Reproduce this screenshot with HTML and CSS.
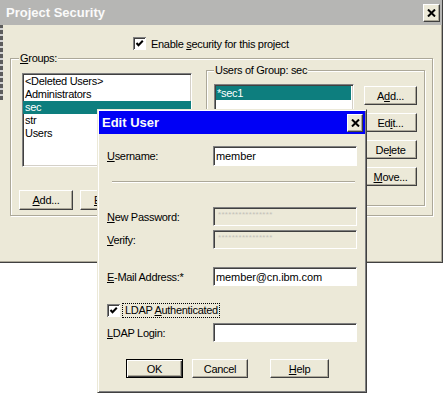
FILE: index.html
```html
<!DOCTYPE html>
<html>
<head>
<meta charset="utf-8">
<title>Project Security</title>
<link rel="stylesheet" href="styles.css">
</head>
<body>
<div class="window">
  <div class="titlebar inactive">
    <span class="title">Project Security</span>
    <span class="close"><svg width="9" height="8" viewBox="0 0 9 8"><path d="M1 0.5 L8 7.5 M8 0.5 L1 7.5" stroke="#000" stroke-width="2"/></svg></span>
  </div>
  <div class="wbody">
    <div class="enable">
      <span class="check"><svg width="13" height="13" viewBox="0 0 13 13"><rect x="0" y="0" width="13" height="13" fill="#808080"/><rect x="1" y="1" width="12" height="12" fill="#fff"/><rect x="1" y="1" width="11" height="11" fill="#404040"/><rect x="2" y="2" width="10" height="10" fill="#fff"/><rect x="1" y="12" width="12" height="1" fill="#fff"/><rect x="12" y="1" width="1" height="12" fill="#fff"/><polyline points="3.5,6 5.5,8.2 9.8,3.8" fill="none" stroke="#000" stroke-width="2"/></svg></span>
      <span>Enable <u>s</u>ecurity for this project</span>
    </div>
    <div class="group groups">
      <span class="legend"><u>G</u>roups:</span>
      <div class="group-row">
        <div class="leftcol">
          <ul class="listbox grouplist">
            <li>&lt;Deleted Users&gt;</li>
            <li>Administrators</li>
            <li class="sel">sec</li>
            <li>str</li>
            <li>Users</li>
          </ul>
          <div class="btnrow">
            <button class="btn w54"><u>A</u>dd...</button>
            <button class="btn w54"><u>E</u>dit...</button>
            <button class="btn w54">De<u>l</u>ete</button>
          </div>
        </div>
        <div class="group users">
          <span class="legend">Users of Group: sec</span>
          <div class="users-row">
            <ul class="listbox userlist">
              <li class="sel">*sec1</li>
            </ul>
            <div class="btncol">
              <button class="btn w53">A<u>d</u>d...</button>
              <button class="btn w53">Ed<u>i</u>t...</button>
              <button class="btn w53">De<u>l</u>ete</button>
              <button class="btn w53"><u>M</u>ove...</button>
            </div>
          </div>
        </div>
      </div>
    </div>
  </div>
</div>

<div class="dialog">
  <div class="titlebar active">
    <span class="title">Edit User</span>
    <span class="close dclose"><svg width="9" height="8" viewBox="0 0 9 8"><path d="M1 0.5 L8 7.5 M8 0.5 L1 7.5" stroke="#000" stroke-width="2"/></svg></span>
  </div>
  <div class="form">
    <div class="frow r-user">
      <span class="lbl"><u>U</u>sername:</span>
      <span class="field">member</span>
    </div>
    <div class="sep"></div>
    <div class="frow r-pw">
      <span class="lbl"><u>N</u>ew Password:</span>
      <span class="field disabled"><span class="stars">****************</span></span>
    </div>
    <div class="frow r-verify">
      <span class="lbl"><u>V</u>erify:</span>
      <span class="field disabled"><span class="stars">****************</span></span>
    </div>
    <div class="frow r-mail">
      <span class="lbl"><u>E</u>-Mail Address:*</span>
      <span class="field">member@cn.ibm.com</span>
    </div>
    <div class="cbrow">
      <span class="check"><svg width="13" height="13" viewBox="0 0 13 13"><rect x="0" y="0" width="13" height="13" fill="#808080"/><rect x="1" y="1" width="12" height="12" fill="#fff"/><rect x="1" y="1" width="11" height="11" fill="#404040"/><rect x="2" y="2" width="10" height="10" fill="#fff"/><rect x="1" y="12" width="12" height="1" fill="#fff"/><rect x="12" y="1" width="1" height="12" fill="#fff"/><polyline points="3.5,6 5.5,8.2 9.8,3.8" fill="none" stroke="#000" stroke-width="2"/></svg></span>
      <span class="focus">LDAP <u>A</u>uthenticated</span>
    </div>
    <div class="frow r-ldap">
      <span class="lbl"><u>L</u>DAP Login:</span>
      <span class="field"></span>
    </div>
    <div class="dbtns">
      <button class="btn default">OK</button>
      <button class="btn cancel">Cancel</button>
      <button class="btn help"><u>H</u>elp</button>
    </div>
  </div>
</div>
</body>
</html>
```

FILE: styles.css
```css
* { box-sizing: border-box; }
html, body { margin: 0; padding: 0; }
body {
  width: 443px;
  height: 395px;
  overflow: hidden;
  position: relative;
  background: #fff;
  font-family: "Liberation Sans", Arial, sans-serif;
  font-size: 11px;
  letter-spacing: -0.3px;
  color: #000;
}
u { text-decoration: underline; text-underline-offset: 1px; }
ul { list-style: none; margin: 0; }

.window {
  width: 443px;
  height: 263px;
  display: flex;
  flex-direction: column;
  background:
    repeating-linear-gradient(to bottom, #5c5c5c 0 4px, #d2d2d2 4px 6px) 0 0 / 3px 100px no-repeat,
    #ece9d8;
  border-right: 1px solid #404040;
  border-bottom: 1px solid #404040;
  box-shadow: inset -1px -1px #aca899;
}

.titlebar {
  display: flex;
  align-items: center;
  flex: none;
}
.titlebar.inactive {
  height: 25px;
  background: #b6b6b4;
  padding: 0 2px 0 6px;
}
.titlebar .title {
  font-weight: bold;
  font-size: 13px;
  letter-spacing: 0;
  color: #fafafa;
}
.close {
  margin-left: auto;
  width: 17px;
  height: 18px;
  display: flex;
  align-items: center;
  justify-content: center;
  background: #ece9d8;
  border: 1px solid;
  border-color: #fff #404040 #404040 #fff;
  box-shadow: inset -1px -1px #aca899;
}

.wbody {
  display: flex;
  flex-direction: column;
  padding-top: 12px;
}

.enable {
  display: flex;
  align-items: center;
  gap: 5px;
  height: 13px;
  padding-left: 133px;
}
.check { display: block; width: 13px; height: 13px; }
.check svg { display: block; }

.group {
  border: 1px solid #aca899;
  box-shadow: 1px 1px #fff, inset 1px 1px #fff;
  display: flex;
  flex-direction: column;
}
.groups {
  margin: 8px 0 0 10px;
  width: 423px;
  height: 158px;
}
.legend {
  display: block;
  width: max-content;
  line-height: 13px;
  margin: -7px 0 0 8px;
  padding: 0 1px;
  background: #ece9d8;
}
.group-row {
  display: flex;
  align-items: flex-start;
}
.leftcol {
  width: 173px;
  margin: 8px 0 0 8px;
  flex: none;
}
.listbox {
  background: #fff;
  border: 1px solid;
  border-color: #808080 #fff #fff #808080;
  box-shadow: inset 1px 1px #404040, inset -1px -1px #d4d0c8;
  padding: 1px 0;
  overflow: hidden;
}
.listbox li {
  height: 13px;
  line-height: 13px;
  padding-left: 2px;
  white-space: nowrap;
}
.listbox li.sel {
  background: #0d7e7e;
  color: #fff;
}
.grouplist {
  width: 170px;
  height: 94px;
  margin-left: 3px;
}
.btnrow {
  display: flex;
  gap: 7px;
  margin-top: 23px;
}

.btn {
  font: inherit;
  letter-spacing: inherit;
  color: #000;
  background: #ece9d8;
  border: 1px solid;
  border-color: #fff #404040 #404040 #fff;
  box-shadow: inset -1px -1px #aca899;
  padding: 0;
  height: 20px;
  flex: none;
}
.w54 { width: 54px; }
.w53 { width: 53px; height: 19px; }

.users {
  margin: 5px 0 0 14px;
  width: 219px;
  height: 136px;
}
.users .legend { margin-left: 7px; }
.users-row {
  display: flex;
  align-items: flex-start;
}
.userlist {
  width: 140px;
  height: 120px;
  margin: 7px 0 0 7px;
  padding: 1px 2px 0 1px;
}
.userlist li {
  height: 14px;
  line-height: 14px;
  padding-left: 1px;
}
.btncol {
  display: flex;
  flex-direction: column;
  gap: 8px;
  margin: 9px 0 0 10px;
}

/* dialog */
.dialog {
  position: absolute;
  left: 97px;
  top: 109px;
  width: 270px;
  height: 284px;
  background: #ece9d8;
  border: 1px solid;
  border-color: #ece9d8 #404040 #404040 #ece9d8;
  box-shadow: inset 1px 1px #fff, inset -1px -1px #808080;
  padding: 1px;
  display: flex;
  flex-direction: column;
}
.titlebar.active {
  height: 23px;
  background: #0000f6;
  padding: 0 2px 0 3px;
}
.dclose { width: 16px; height: 18px; }

.form {
  padding: 12px 8px 0 8px;
  display: flex;
  flex-direction: column;
}
.frow {
  display: flex;
  align-items: center;
  height: 19px;
}
.lbl { width: 106px; flex: none; }
.field {
  width: 144px;
  height: 100%;
  background: #fff;
  border: 1px solid;
  border-color: #808080 #fff #fff #808080;
  box-shadow: inset 1px 1px #404040;
  padding-left: 2px;
  display: flex;
  align-items: center;
  letter-spacing: -0.1px;
}
.field.disabled {
  background: #ece9d8;
  align-items: flex-start;
  padding: 3px 0 0 4px;
}
.stars {
  font-size: 8px;
  line-height: 8px;
  letter-spacing: 0.3px;
  color: #c4c2b8;
}
.r-user { height: 20px; }
.sep {
  margin: 15px 0 0 5px;
  width: 243px;
  height: 2px;
  border-top: 1px solid #aca899;
  border-bottom: 1px solid #fff;
}
.r-pw { margin-top: 24px; }
.r-verify { margin-top: 4px; }
.r-mail { margin-top: 18px; }
.cbrow {
  margin-top: 17px;
  height: 14px;
  display: flex;
  align-items: center;
  gap: 3px;
}
.focus {
  outline: 1px dotted #000;
  outline-offset: 0;
  padding: 0 1px 0 2px;
  line-height: 13px;
}
.r-ldap { margin-top: 6px; }
.dbtns {
  display: flex;
  margin-top: 17px;
  padding-left: 19px;
}
.dbtns .btn { height: 19px; }
.default {
  width: 57px;
  border: 1px solid #000;
  box-shadow: inset 1px 1px #fff, inset -1px -1px #404040, inset -2px -2px #aca899;
}
.cancel { width: 56px; margin-left: 9px; }
.help { width: 59px; margin-left: 22px; }
```
